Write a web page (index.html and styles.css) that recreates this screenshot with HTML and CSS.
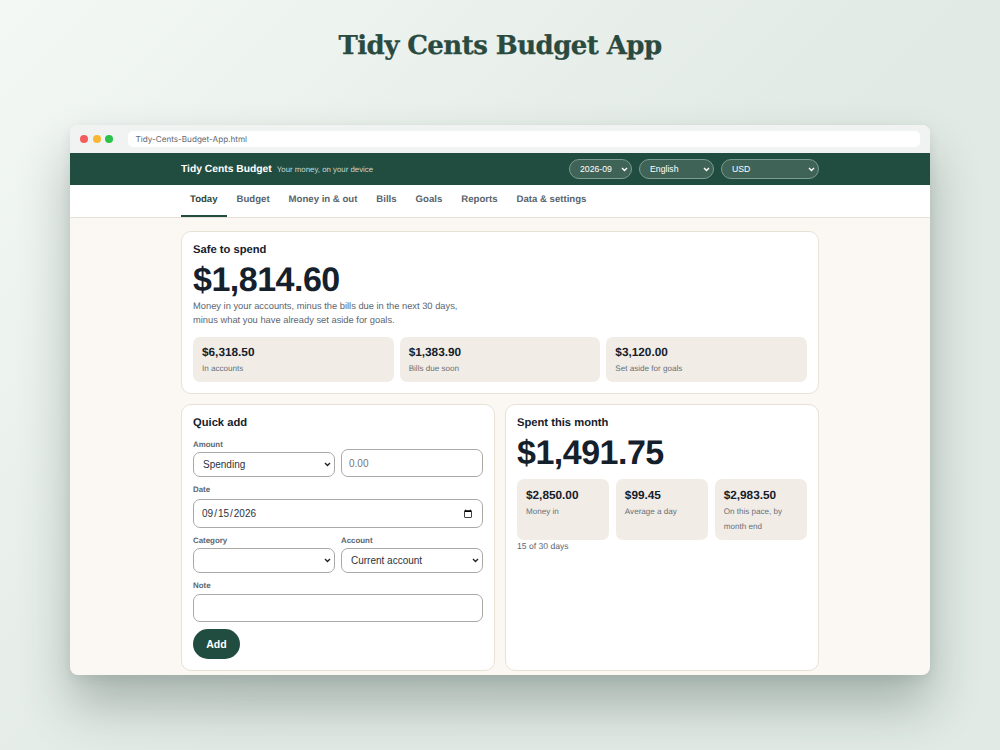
FILE: index.html
```html
<!DOCTYPE html>
<html lang="en">
<head>
<meta charset="utf-8">
<title>Tidy Cents Budget App</title>
<link rel="stylesheet" href="styles.css">
</head>
<body>
<h1 class="page-title">Tidy Cents Budget App</h1>
<div class="window">
  <div class="chrome">
    <span class="dot dot-red"></span><span class="dot dot-yellow"></span><span class="dot dot-green"></span>
    <div class="url">Tidy-Cents-Budget-App.html</div>
  </div>
  <header class="app-header">
    <div class="wrap header-row">
      <div class="brand"><strong>Tidy Cents Budget</strong><span>Your money, on your device</span></div>
      <div class="header-controls">
        <select class="pill pill-month"><option>2026-09</option></select>
        <select class="pill pill-lang"><option>English</option></select>
        <select class="pill pill-cur"><option>USD</option></select>
      </div>
    </div>
  </header>
  <nav class="tabs">
    <div class="wrap tab-row">
      <a class="tab active">Today</a>
      <a class="tab">Budget</a>
      <a class="tab">Money in &amp; out</a>
      <a class="tab">Bills</a>
      <a class="tab">Goals</a>
      <a class="tab">Reports</a>
      <a class="tab">Data &amp; settings</a>
    </div>
  </nav>
  <main class="content">
    <div class="wrap stack">
      <section class="card">
        <h2>Safe to spend</h2>
        <div class="big">$1,814.60</div>
        <p class="lead">Money in your accounts, minus the bills due in the next 30 days,<br>minus what you have already set aside for goals.</p>
        <div class="tiles">
          <div class="tile"><b>$6,318.50</b><span>In accounts</span></div>
          <div class="tile"><b>$1,383.90</b><span>Bills due soon</span></div>
          <div class="tile"><b>$3,120.00</b><span>Set aside for goals</span></div>
        </div>
      </section>
      <div class="columns">
        <section class="card">
          <h2>Quick add</h2>
          <form class="form">
            <div class="field-row">
              <div class="field">
                <label>Amount</label>
                <select class="control"><option>Spending</option></select>
              </div>
              <input class="control text-control amount" placeholder="0.00">
            </div>
            <div class="field field-date">
              <label>Date</label>
              <input class="control text-control date" type="date" value="2026-09-15">
            </div>
            <div class="field-row">
              <div class="field">
                <label>Category</label>
                <select class="control"><option></option></select>
              </div>
              <div class="field">
                <label>Account</label>
                <select class="control"><option>Current account</option></select>
              </div>
            </div>
            <div class="field field-note">
              <label>Note</label>
              <input class="control text-control note">
            </div>
            <button type="button" class="add">Add</button>
          </form>
        </section>
        <section class="card">
          <h2>Spent this month</h2>
          <div class="big">$1,491.75</div>
          <div class="tiles tiles-tall">
            <div class="tile"><b>$2,850.00</b><span>Money in</span></div>
            <div class="tile"><b>$99.45</b><span>Average a day</span></div>
            <div class="tile"><b>$2,983.50</b><span>On this pace, by month end</span></div>
          </div>
          <p class="days">15 of 30 days</p>
        </section>
      </div>
    </div>
  </main>
</div>
</body>
</html>
```

FILE: styles.css
```css
* { box-sizing: border-box; }
html, body { height: 100%; }
body {
  margin: 0;
  height: 750px;
  overflow: hidden;
  background: linear-gradient(135deg, #f3f8f5 0%, #e2eae5 55%, #e1eae5 100%);
  font-family: "Liberation Sans", Arial, sans-serif;
  color: #14202b;
  text-rendering: geometricPrecision;
}
.page-title {
  margin: 0;
  padding-top: 27px;
  height: 125px;
  text-align: center;
  font-family: "DejaVu Serif", serif;
  font-size: 26px;
  line-height: 38px;
  font-weight: 700;
  letter-spacing: -0.55px;
  -webkit-text-stroke: 0.3px #2a4a3f;
  color: #2a4a3f;
}
.window {
  width: 860px;
  height: 550px;
  margin: 0 auto;
  border-radius: 8px;
  overflow: hidden;
  background: #fbf8f3;
  box-shadow: 0 30px 50px rgba(25, 50, 42, 0.3), 0 4px 12px rgba(25, 50, 42, 0.08);
  display: flex;
  flex-direction: column;
}
.chrome {
  height: 28px;
  flex: none;
  background: #f0f3f1;
  display: flex;
  align-items: center;
  padding: 0 10px;
  gap: 4.5px;
}
.dot { width: 8px; height: 8px; border-radius: 50%; }
.dot-red { background: #f45c5c; }
.dot-yellow { background: #f8b733; }
.dot-green { background: #2bc14a; }
.url {
  margin-left: 10px;
  flex: 1;
  height: 16px;
  background: #fff;
  border-radius: 5px;
  padding-left: 8px;
  font-family: Inter, "Liberation Sans", sans-serif;
  font-size: 8.15px;
  line-height: 17px;
  color: #5f6870;
}
.wrap { width: 638px; margin: 0 auto; }
.app-header {
  height: 32px;
  flex: none;
  background: #214d40;
  display: flex;
  align-items: center;
}
.header-row { display: flex; align-items: center; justify-content: space-between; }
.brand { color: #fff; display: flex; align-items: baseline; gap: 5px; }
.brand strong { font-size: 10.3px; }
.brand span { font-size: 7.85px; color: #c9d6d0; }
.header-controls { display: flex; gap: 7px; }
.pill {
  appearance: none;
  height: 20px;
  border-radius: 10px;
  border: 1px solid #7d9c90;
  background: #3f6356 url("data:image/svg+xml,%3Csvg xmlns='http://www.w3.org/2000/svg' width='7' height='5'%3E%3Cpath d='M1 1l2.5 2.5L6 1' fill='none' stroke='%23fff' stroke-width='1.4'/%3E%3C/svg%3E") no-repeat right 3px center;
  color: #fff;
  font-family: inherit;
  font-size: 8.7px;
  padding: 0 10px;
}
.pill-month { width: 63px; }
.pill-lang { width: 75px; }
.pill-cur { width: 98px; }
.tabs {
  height: 33px;
  flex: none;
  background: #fff;
  border-bottom: 1px solid #e6e1d8;
}
.tab-row { display: flex; gap: 1px; height: 32px; }
.tab {
  padding: 0 9px;
  font-size: 9.6px;
  font-weight: 700;
  line-height: 29px;
  color: #59646e;
  height: 32px;
}
.tab.active { color: #2f4a41; border-bottom: 2px solid #214d40; }
.content { flex: 1; padding-top: 13px; overflow: hidden; }
.stack { display: flex; flex-direction: column; gap: 10px; }
.columns { display: grid; grid-template-columns: 314px 314px; gap: 10px; height: 267px; }
.card {
  background: #fff;
  border: 1px solid #e7e1d6;
  border-radius: 10px;
  padding: 11px;
}
.card h2 { margin: 0; font-size: 11.2px; line-height: 14px; font-weight: 700; color: #14202b; }
.big {
  margin-top: 4px;
  font-size: 34px;
  line-height: 38px;
  font-weight: 700;
  letter-spacing: -0.5px;
  color: #14202b;
}
.lead { margin: 0; font-size: 9.33px; line-height: 14px; color: #5d6670; }
.tiles { display: grid; grid-template-columns: 1fr 1fr 1fr; gap: 6px; margin-top: 10px; }
.tile {
  background: #f1ece5;
  border-radius: 7px;
  padding: 8px 9px;
  height: 45px;
}
.tile b { display: block; font-size: 11.8px; line-height: 15px; color: #14202b; }
.tile span { display: block; font-size: 8.1px; line-height: 15px; margin-top: 1px; color: #67707a; }
.tiles-tall { margin-top: 7px; gap: 6.5px; }
.tiles-tall .tile { height: 61px; padding-top: 9px; }
.days { margin: 0; font-size: 8.6px; line-height: 12px; color: #5d6670; }
.form { margin-top: 9px; display: flex; flex-direction: column; gap: 7px; }
.field-row { display: grid; grid-template-columns: 142px 142px; gap: 6px; align-items: end; }
.field { display: flex; flex-direction: column; gap: 2px; }
.field-date { gap: 4px; }
.field-note { gap: 3px; }
.field label { font-size: 7.9px; line-height: 11px; font-weight: 700; color: #5d6670; }
.control {
  width: 100%;
  height: 25px;
  border: 1px solid #a9a9a6;
  border-radius: 7px;
  background: #fff;
  color: #2a333b;
  font-family: inherit;
  font-size: 10px;
  padding: 0 7px;
}
select.control {
  appearance: none;
  padding: 0 9px;
  background: #fff url("data:image/svg+xml,%3Csvg xmlns='http://www.w3.org/2000/svg' width='7' height='5'%3E%3Cpath d='M1 1l2.5 2.5L6 1' fill='none' stroke='%23222' stroke-width='1.4'/%3E%3C/svg%3E") no-repeat right 3px center;
}
.text-control { height: 28px; }
.date { height: 29px; }
.add {
  align-self: flex-start;
  width: 47px;
  height: 30px;
  border: none;
  border-radius: 15px;
  background: #214d40;
  color: #fff;
  font-family: inherit;
  font-size: 10.5px;
  font-weight: 700;
}
```
